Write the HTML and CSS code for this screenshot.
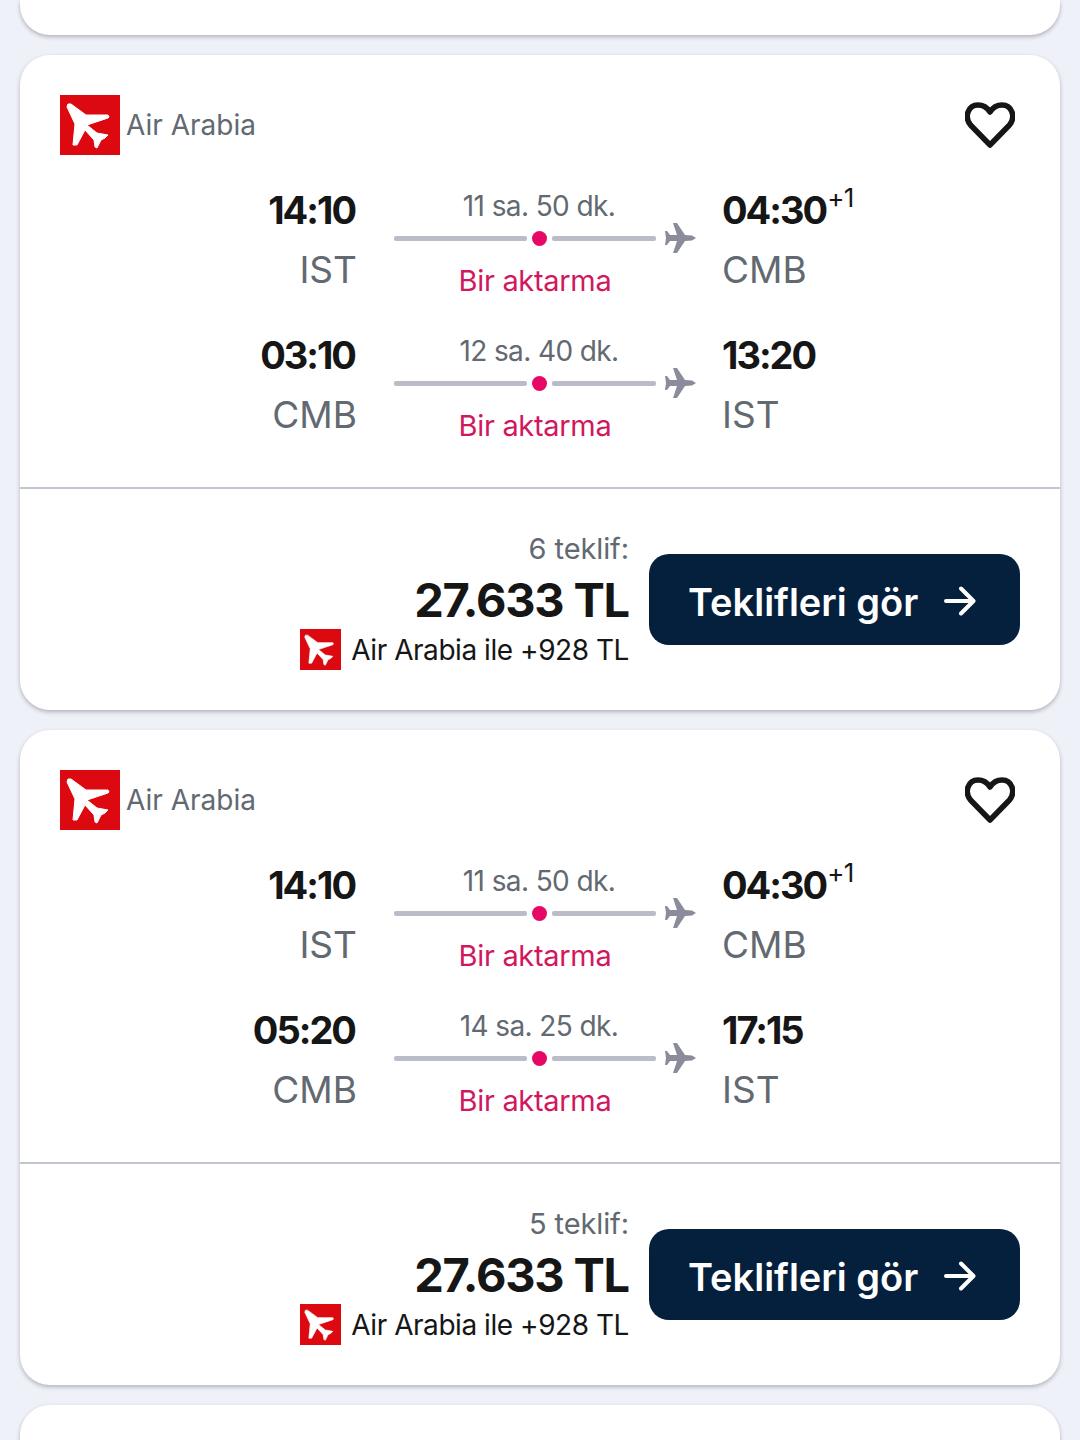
FILE: index.html
```html
<!DOCTYPE html>
<html lang="tr">
<head>
    <meta charset="UTF-8">
    <meta name="viewport" content="width=device-width, initial-scale=1.0">
    <title>Uçuş sonuçları</title>
    <link rel="stylesheet" href="styles.css">
</head>
<body>
    <svg class="defs" width="0" height="0">
        <symbol id="logo" viewBox="0 0 60 60">
            <rect width="60" height="60" fill="#dc0a10"/>
            <path fill="#fff" stroke="#fff" stroke-linejoin="round" d="M8 9 L11 9 L26 20 L48 20 L49 22 L48 23 L27 30 L37 38 L48 40 L45 43 L41 45 L37 53 L35 52 L34 45 L25 35 L17 50 L13 50 L15 29 L7 12 Z"/>
        </symbol>
        <symbol id="plane" viewBox="0 0 32 32">
            <path fill="#8a8c9b" d="M9 1 L13 1 L21 13 L28 13.500 L32 16 L28 18.500 L21 19 L13 31 L9 31 L13 19 L6 19 L3 23 L1 23 L2 16 L1 9 L3 9 L6 13 L13 13 Z"/>
        </symbol>
    </svg>

    <div class="card stub-top"></div>

    <div class="card">
        <div class="card-head">
            <div class="airline">
                <svg class="logo"><use href="#logo"/></svg>
                <span>Air Arabia</span>
            </div>
            <svg class="heart" viewBox="0 0 50 46"><path d="M25 43 L5.5 23 C-1 15 3 3 13 3 C18.5 3 22.5 6 25 10 C27.500 6 31.500 3 37 3 C47 3 51 15 44.500 23 Z"/></svg>
        </div>
        <div class="leg">
            <div class="end from"><div class="time">14:10</div><div class="code">IST</div></div>
            <div class="route">
                <div class="duration">11 sa. 50 dk.</div>
                <div class="track">
                    <span class="line line-a"></span><span class="dot"></span><span class="line line-b"></span>
                    <svg class="plane"><use href="#plane"/></svg>
                </div>
                <div class="stops">Bir aktarma</div>
            </div>
            <div class="end"><div class="time">04:30<sup>+1</sup></div><div class="code">CMB</div></div>
        </div>
        <div class="leg">
            <div class="end from"><div class="time">03:10</div><div class="code">CMB</div></div>
            <div class="route">
                <div class="duration">12 sa. 40 dk.</div>
                <div class="track">
                    <span class="line line-a"></span><span class="dot"></span><span class="line line-b"></span>
                    <svg class="plane"><use href="#plane"/></svg>
                </div>
                <div class="stops">Bir aktarma</div>
            </div>
            <div class="end"><div class="time">13:20</div><div class="code">IST</div></div>
        </div>
        <div class="card-foot">
            <div class="price-box">
                <div class="deals">6 teklif:</div>
                <div class="price">27.633 TL</div>
                <div class="extra">
                    <svg class="logo-small"><use href="#logo"/></svg>
                    <span>Air Arabia ile +928 TL</span>
                </div>
            </div>
            <button class="btn">
                <span>Teklifleri gör</span>
                <svg class="arrow" viewBox="0 0 32 32"><path d="M2 16 H29 M17 3.500 L29.500 16 L17 28.500"/></svg>
            </button>
        </div>
    </div>

    <div class="card">
        <div class="card-head">
            <div class="airline">
                <svg class="logo"><use href="#logo"/></svg>
                <span>Air Arabia</span>
            </div>
            <svg class="heart" viewBox="0 0 50 46"><path d="M25 43 L5.5 23 C-1 15 3 3 13 3 C18.5 3 22.5 6 25 10 C27.500 6 31.500 3 37 3 C47 3 51 15 44.500 23 Z"/></svg>
        </div>
        <div class="leg">
            <div class="end from"><div class="time">14:10</div><div class="code">IST</div></div>
            <div class="route">
                <div class="duration">11 sa. 50 dk.</div>
                <div class="track">
                    <span class="line line-a"></span><span class="dot"></span><span class="line line-b"></span>
                    <svg class="plane"><use href="#plane"/></svg>
                </div>
                <div class="stops">Bir aktarma</div>
            </div>
            <div class="end"><div class="time">04:30<sup>+1</sup></div><div class="code">CMB</div></div>
        </div>
        <div class="leg">
            <div class="end from"><div class="time">05:20</div><div class="code">CMB</div></div>
            <div class="route">
                <div class="duration">14 sa. 25 dk.</div>
                <div class="track">
                    <span class="line line-a"></span><span class="dot"></span><span class="line line-b"></span>
                    <svg class="plane"><use href="#plane"/></svg>
                </div>
                <div class="stops">Bir aktarma</div>
            </div>
            <div class="end"><div class="time">17:15</div><div class="code">IST</div></div>
        </div>
        <div class="card-foot">
            <div class="price-box">
                <div class="deals">5 teklif:</div>
                <div class="price">27.633 TL</div>
                <div class="extra">
                    <svg class="logo-small"><use href="#logo"/></svg>
                    <span>Air Arabia ile +928 TL</span>
                </div>
            </div>
            <button class="btn">
                <span>Teklifleri gör</span>
                <svg class="arrow" viewBox="0 0 32 32"><path d="M2 16 H29 M17 3.500 L29.500 16 L17 28.500"/></svg>
            </button>
        </div>
    </div>

    <div class="card stub-bottom"></div>
</body>
</html>
```

FILE: styles.css
```css
html, body {
    height: 1440px;
    overflow: hidden;
}
body {
    margin: 0;
    padding: 0 20px;
    background: #eff1f8;
    font-family: Inter, "Noto Sans", sans-serif;
    display: flex;
    flex-direction: column;
    gap: 20px;
}
.defs {
    position: absolute;
}
.card {
    flex: none;
    height: 655px;
    background: #fff;
    border-radius: 30px;
    box-shadow: 0 2px 4px rgba(37, 32, 51, 0.3);
}
.stub-top {
    height: 35px;
    border-radius: 0 0 30px 30px;
}
.stub-bottom {
    height: 100px;
}
.card-head {
    display: flex;
    justify-content: space-between;
    align-items: center;
    padding: 40px 45px 0 40px;
    height: 60px;
    margin-bottom: 25px;
}
.airline {
    display: flex;
    align-items: center;
    gap: 6px;
    font-size: 28px;
    color: #626971;
}
.logo {
    width: 60px;
    height: 60px;
}
.heart {
    width: 50px;
    height: 46px;
}
.heart path {
    fill: none;
    stroke: #161616;
    stroke-width: 5.5;
    stroke-linejoin: round;
}
.leg {
    display: grid;
    grid-template-columns: 296px 340px 1fr;
    padding-left: 40px;
    height: 145px;
}
.end {
    padding-left: 26px;
}
.from {
    padding-left: 0;
    text-align: right;
}
.time {
    font-size: 38px;
    font-weight: 700;
    line-height: 60px;
    color: #161616;
    letter-spacing: -2px;
}
.from .time {
    margin-right: 1px;
}
.time sup {
    font-size: 26px;
    font-weight: 400;
    line-height: 0;
    letter-spacing: -0.5px;
    vertical-align: 17px;
    margin-left: 1px;
}
.code {
    font-size: 37px;
    line-height: 60px;
    color: #626971;
}
.from .code {
    margin-right: -1px;
}
.route {
    display: flex;
    flex-direction: column;
    padding: 8px 0 0 38px;
}
.duration {
    width: 290px;
    text-align: center;
    font-size: 28px;
    letter-spacing: -0.6px;
    line-height: 36px;
    color: #626971;
}
.track {
    display: flex;
    align-items: center;
    height: 32px;
    margin-top: -2px;
}
.line {
    height: 5px;
    background: #babcc7;
    border-radius: 2px;
}
.line-a {
    width: 133px;
}
.line-b {
    width: 104px;
}
.dot {
    width: 15px;
    height: 15px;
    border-radius: 50%;
    background: #e70866;
    margin: 0 5px;
}
.plane {
    width: 32px;
    height: 32px;
    margin-left: 8px;
}
.stops {
    width: 282px;
    text-align: center;
    font-size: 29px;
    letter-spacing: -0.3px;
    line-height: 36px;
    margin-top: 9px;
    color: #d1185f;
}
.card-foot {
    display: flex;
    justify-content: flex-end;
    align-items: center;
    gap: 20px;
    border-top: 2px solid #c2c4cf;
    margin-top: 17px;
    padding: 37px 40px 0 0;
}
.price-box {
    display: flex;
    flex-direction: column;
    align-items: flex-end;
}
.deals {
    font-size: 29px;
    letter-spacing: -0.1px;
    line-height: 46px;
    color: #626971;
}
.price {
    font-size: 47px;
    font-weight: 700;
    line-height: 56px;
    color: #161616;
    letter-spacing: -1.2px;
}
.extra {
    display: flex;
    align-items: center;
    gap: 10px;
    margin-top: 1px;
    font-size: 28px;
    letter-spacing: -0.45px;
    color: #161616;
}
.logo-small {
    width: 41px;
    height: 41px;
}
.btn {
    display: flex;
    align-items: center;
    justify-content: space-between;
    width: 371px;
    height: 91px;
    margin-top: 3px;
    padding: 0 44px 0 39px;
    border: none;
    border-radius: 20px;
    background: #05203c;
    color: #fff;
    font-family: inherit;
    font-size: 38px;
    font-weight: 600;
}
.btn span {
    margin-top: 4px;
}
.arrow {
    width: 32px;
    height: 32px;
    margin-top: 2px;
}
.arrow path {
    fill: none;
    stroke: #fff;
    stroke-width: 4;
    stroke-linecap: round;
    stroke-linejoin: round;
}
```
